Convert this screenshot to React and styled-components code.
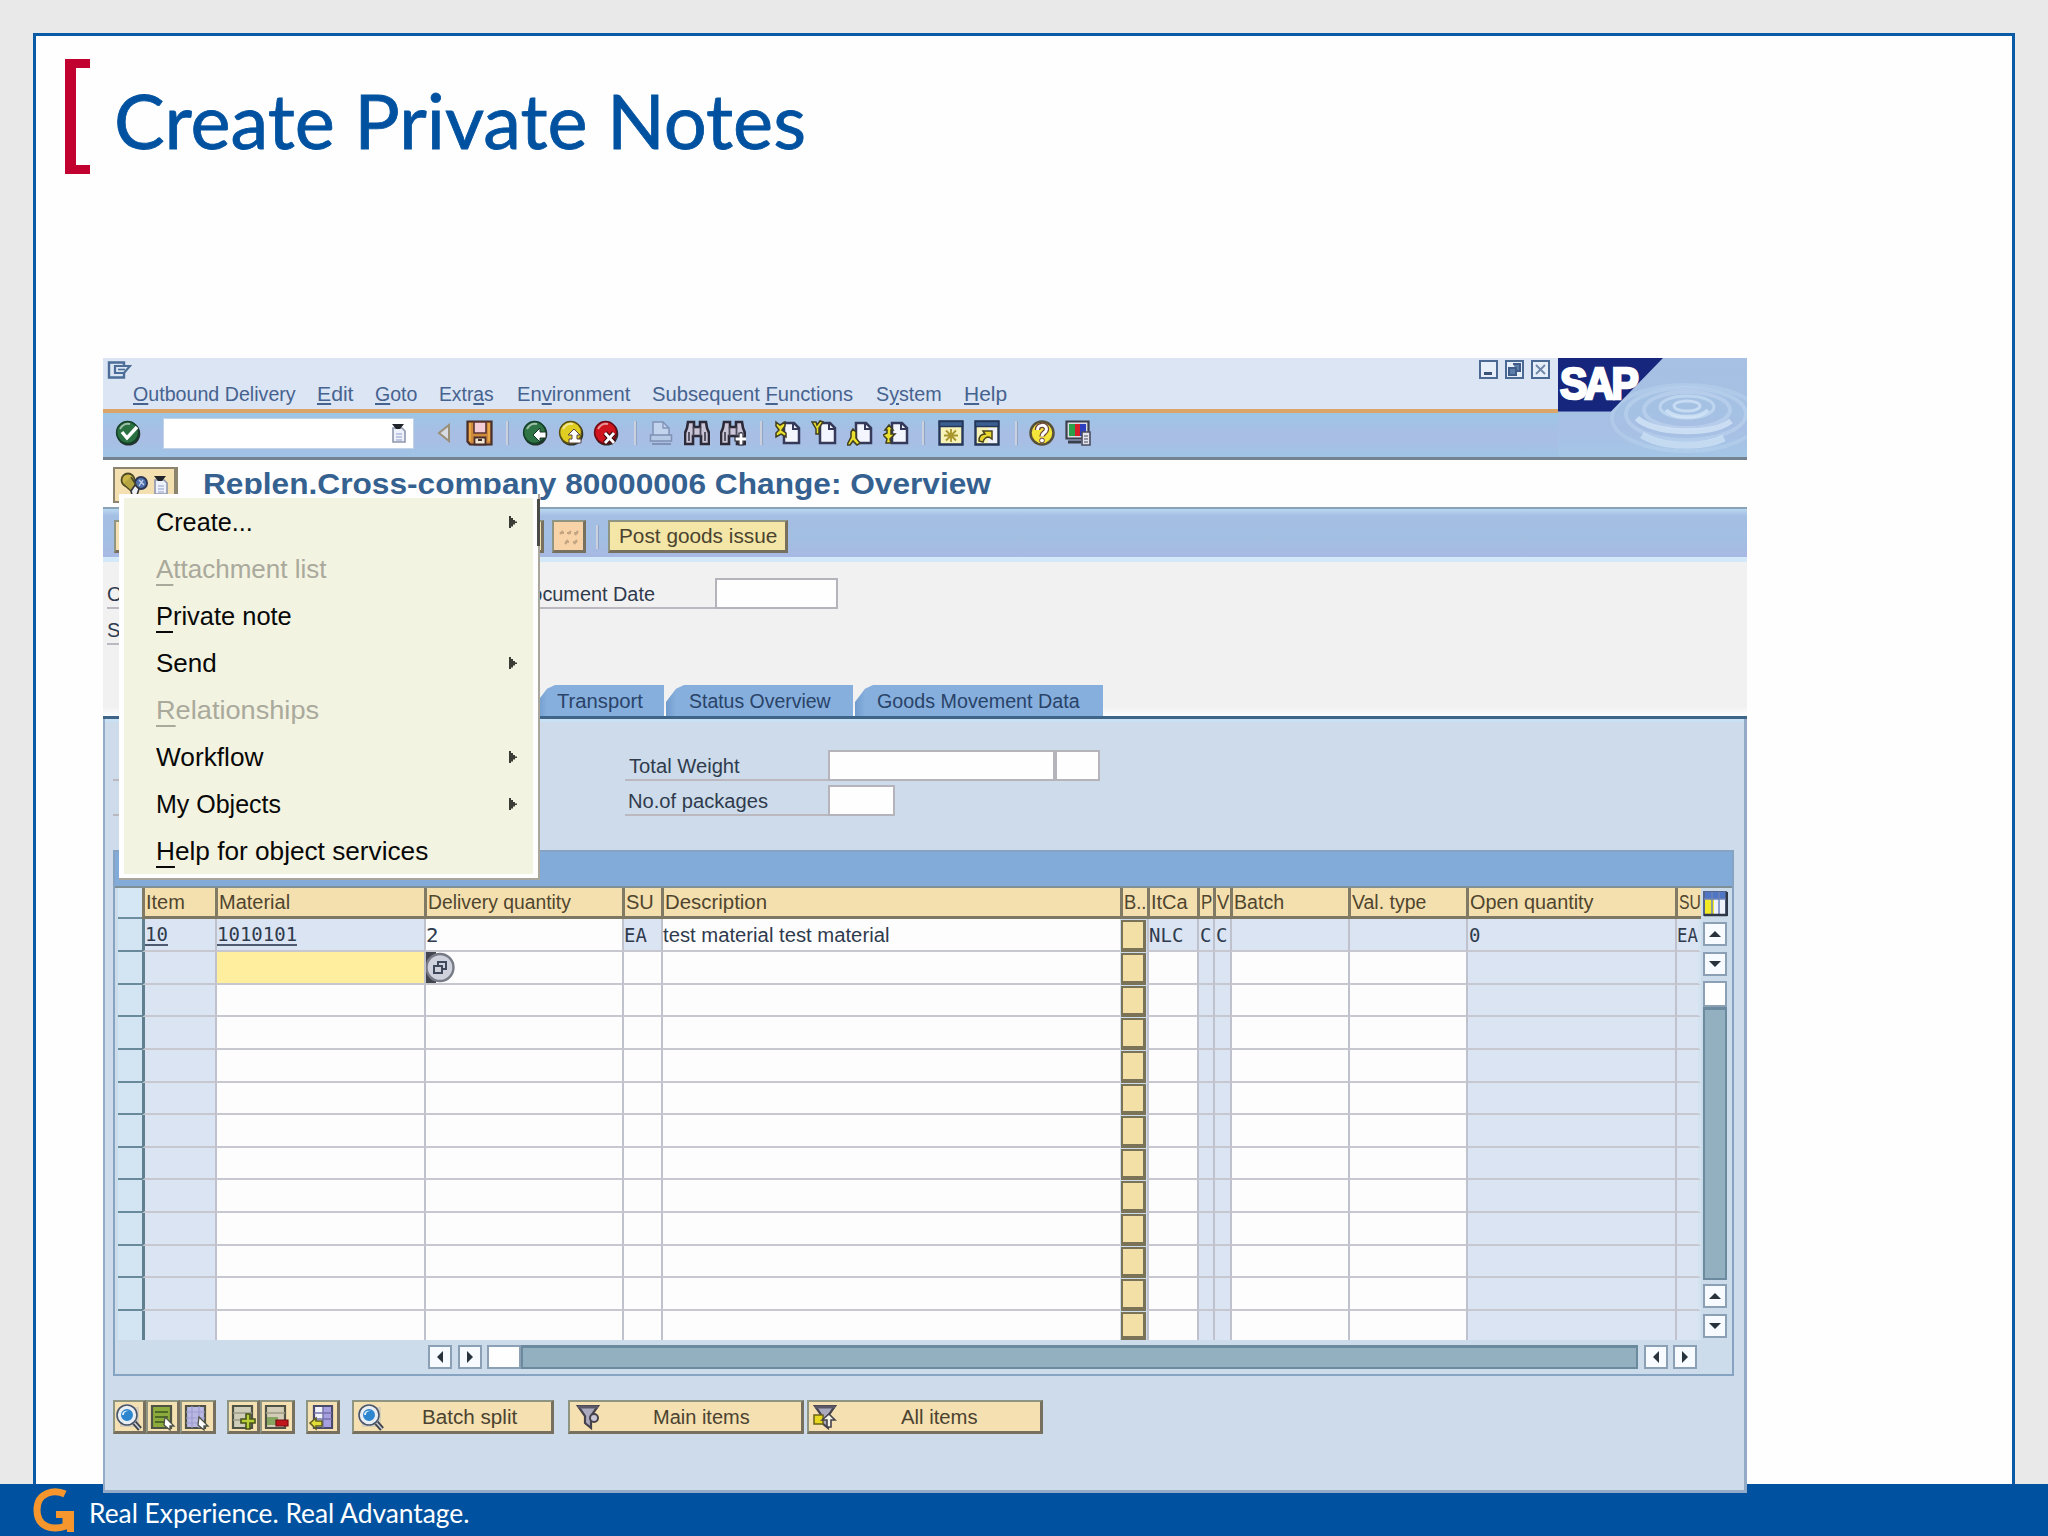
import React, { useLayoutEffect, useRef, useState } from "react";
import styled, { createGlobalStyle } from "styled-components";
/* Training slide with the SAP outbound delivery screen and its object services menu. */

const GlobalStyle = createGlobalStyle`
  * {
    box-sizing: border-box;
  }

  body {
    margin: 0;
    background: #e9e9e9;
    font-family: "Liberation Sans", Arial, sans-serif;
  }

  svg {
    display: block;
    flex: none;
  }
`;

/* ---------- text that is squeezed to a given width ---------- */

const FitBox = styled.span`
  display: inline-block;
  flex: none;
  width: ${({ $w }) => $w}px;
  margin-left: ${({ $ml }) => $ml || 0}px;
  white-space: nowrap;
  text-align: left;
`;

const FitInner = styled.span`
  display: inline-block;
  transform-origin: 0 50%;
`;

const Fit = ({ w, ml, children }) => {
  const ref = useRef(null);
  const [scale, setScale] = useState(1);

  useLayoutEffect(() => {
    setScale(w / ref.current.offsetWidth);
  }, [w]);

  return (
    <FitBox $w={w} $ml={ml}>
      <FitInner ref={ref} style={{ transform: `scaleX(${scale})` }}>
        {children}
      </FitInner>
    </FitBox>
  );
};

/* ---------- slide ---------- */

const Slide = styled.div`
  width: 2048px;
  height: 1536px;
  overflow: hidden;
  display: flex;
  flex-direction: column;
  background: #e9e9e9;
`;

const Frame = styled.main`
  height: 1451px;
  flex: none;
  margin: 33px 33px 0;
  border: 3px solid #0a5aa6;
  border-bottom: 0;
  background: #fefefe;
`;

const Heading = styled.header`
  display: flex;
  height: 322px;
  padding: 23px 0 0 29px;
`;

const Bracket = styled.div`
  width: 25px;
  height: 115px;
  border: solid #c10230;
  border-width: 9px 0 9px 11px;
`;

const Title = styled.h1`
  margin: 16px 0 0 24px;
  font: 400 75px/1.2 Lato, sans-serif;
  color: #0052a0;
  -webkit-text-stroke: 0.8px #0052a0;
`;

const Footer = styled.footer`
  flex: none;
  height: 52px;
  display: flex;
  align-items: center;
  padding-left: 33px;
  background: #0052a0;
  color: #fff;
  font: 400 26px/32px Lato, sans-serif;
`;

const Tagline = styled.div`
  padding: 5px 0 0 15px;
`;

/* ---------- window ---------- */

const Window = styled.section`
  position: relative;
  z-index: 1;
  width: 1644px;
  height: 1135px;
  margin-left: 67px;
  font-size: 20px;
  line-height: 24px;
  color: #2f3b4d;
`;

const Header = styled.div`
  display: grid;
  grid-template-columns: 1455px 189px;
  height: 102px;
  border-bottom: 3px solid #75828f;
`;

const MenuBar = styled.div`
  height: 51px;
  padding-left: 4px;
  background: #dbe5f3;
`;

const WindowControls = styled.div`
  display: flex;
  align-items: center;
  height: 21px;
  padding: 2px 8px 0 0;
  gap: 7px;

  svg:first-child {
    margin-right: auto;
  }
`;

const Menus = styled.nav`
  display: flex;
  align-items: center;
  height: 30px;
  padding-left: 26px;
  color: #46628f;

  u {
    text-underline-offset: 2px;
  }
`;

const Toolbar = styled.div`
  display: flex;
  align-items: center;
  height: 48px;
  padding: 0 0 4px 12px;
  border-top: 4px solid #dba468;
  background: linear-gradient(#9cc6e6, #a8bee4 45%, #a8bee4 65%, #9fc5e6);
`;

const Command = styled.div`
  display: flex;
  justify-content: flex-end;
  align-items: center;
  width: 251px;
  height: 31px;
  margin: 0 23px 0 22px;
  padding-right: 6px;
  border: 1px solid #c3d3ea;
  background: #fff;
`;

const Separator = styled.i`
  flex: none;
  width: 3px;
  height: 24px;
  margin: 0 ${({ $r }) => $r}px 0 ${({ $l }) => $l}px;
  background: #cbd0de;
  border-right: 1px solid #8fa3c4;
`;

const IconSlot = styled.span`
  flex: none;
  margin-left: ${({ $ml }) => $ml || 0}px;
`;

const TitleBar = styled.div`
  display: flex;
  align-items: center;
  height: 47px;
  padding-left: 10px;
  background: #fefefe;
  font-size: 30px;
  font-weight: 700;
  line-height: 36px;
  color: #356190;
`;

const ObjectServices = styled.div`
  display: flex;
  align-items: center;
  gap: 5px;
  width: 65px;
  height: 36px;
  margin: 3px 25px 0 0;
  padding-left: 5px;
  border: 2px solid #8d8470;
  border-right: 4px solid #8d8470;
  background: #f3dfb0;
`;

const AppToolbar = styled.div`
  display: flex;
  align-items: center;
  height: 55px;
  padding: 7px 0 0 11px;
  border-top: 2px solid #8aa2b5;
  border-bottom: 5px solid #d3e8f8;
  background: linear-gradient(#b9d8f1 0, #a5bee4 7px, #a2bfe2 60%, #a8b9e3);
`;

const TanButton = styled.button`
  display: flex;
  flex: none;
  align-items: center;
  justify-content: ${({ $center }) => ($center ? "center" : "flex-start")};
  width: ${({ $w }) => $w}px;
  height: ${({ $h }) => $h || 34}px;
  margin: 0 0 0 ${({ $ml }) => $ml || 0}px;
  padding: 0;
  border: solid;
  border-width: 2px 3px 3px 2px;
  border-color: #8e9583 #77705f #77705f #8e9583;
  background: ${({ $bg }) => $bg || "#f4e0b0"};
  font: inherit;
  color: #4b4330;
`;

const Form = styled.div`
  display: flex;
  flex-direction: column;
  height: 157px;
  padding-top: 16px;
  border-bottom: 3px solid #3e6588;
  background: linear-gradient(#f2f1f1 145px, #fafdff);
`;

const FieldRow = styled.div`
  display: flex;
  height: 31px;
  margin-bottom: ${({ $mb }) => $mb || 0}px;
`;

const FieldLabel = styled.label`
  display: flex;
  flex: none;
  align-items: center;
  width: ${({ $w }) => $w}px;
  margin-left: ${({ $ml }) => $ml || 0}px;
  padding-top: 2px;
  border-bottom: 2px solid #bbb9bf;
`;

const Input = styled.div`
  flex: none;
  width: ${({ $w }) => $w}px;
  margin-left: ${({ $ml }) => $ml || 0}px;
  border: 2px solid #b4b4ba;
  background: #fefefe;
`;

const Tabs = styled.div`
  display: flex;
  gap: 2px;
  height: 31px;
  margin-top: auto;
  padding-left: 434px;
`;

const Tab = styled.div`
  display: flex;
  align-items: center;
  width: ${({ $w }) => $w}px;
  padding-left: ${({ $pl }) => $pl}px;
  background: linear-gradient(90deg, #6f9bcc, #86afdd 10px);
  clip-path: polygon(0 100%, 0 55%, 10px 12%, 18px 0, 100% 0, 100% 100%);
  color: #2a4368;
`;

const Panel = styled.div`
  height: 774px;
  padding: 31px 0 0 8px;
  border: solid #93abc6;
  border-width: 0 3px 3px 2px;
  background: #cddbea;
  box-shadow: inset 0 3px #c8e1f5;
`;

/* ---------- item table ---------- */

const TableBox = styled.div`
  width: 1621px;
  height: 526px;
  margin-top: 34px;
  border: 2px solid #86a3c2;
  background: #cddcea;
`;

const TableTitle = styled.div`
  height: 36px;
  background: #82abda;
  border-bottom: 2px solid #7f8f96;
`;

const TableBody = styled.div`
  display: flex;
  gap: 2px;
  padding-left: 3px;
`;

const Grid = styled.div`
  width: 1583px;
`;

const Row = styled.div`
  display: grid;
  grid-template-columns: 24px 73px 209px 198px 39px 459px 27px 50px 16px 17px 118px 118px 209px 26px;
  height: ${({ $h }) => $h}px;
`;

const HeadCell = styled.div`
  display: flex;
  align-items: center;
  overflow: hidden;
  padding-left: 1px;
  border-left: 3px solid #817a64;
  border-bottom: 3px solid #7d7863;
  background: #f4e0ae;
  color: #4f452f;

  &:first-child {
    border-left: 0;
    border-bottom: 2px solid #6d8e9e;
    background: #d5e7f4;
  }
`;

const CELL_COLORS = {
  white: "#fefdfe",
  blue: "#dae4f3",
  focus: "#feee9e",
  select: "#d3e5f2",
};

const Cell = styled.div`
  display: flex;
  align-items: center;
  overflow: hidden;
  border-left: ${({ $kind }) => ($kind === "select" ? "0" : "2px solid #bfc1cc")};
  border-bottom: 2px solid ${({ $kind }) => ($kind === "select" ? "#688a9b" : "#c6c7cf")};
  background: ${({ $kind }) => CELL_COLORS[$kind]};
  font-family: ${({ $mono }) => ($mono ? '"DejaVu Sans Mono", monospace' : "inherit")};
  font-size: ${({ $mono }) => ($mono ? "19px" : "inherit")};

  &:first-child + & {
    border-left: 3px solid #61808f;
  }

  &:last-child {
    border-right: 3px solid #d3e3f0;
  }

  ${Row}:last-child > & {
    border-bottom: 0;
  }
`;

const Linked = styled.span`
  margin-top: 2px;
  border-bottom: 2px solid #4d5a70;
  line-height: 19px;
`;

const BatchButton = styled.div`
  margin: 1px 1px 0 1px;
  border: solid #7b7358;
  border-width: 2px 3px 4px 2px;
  background: #f2e0a6;
`;

const SideBar = styled.div`
  display: flex;
  flex-direction: column;
  align-items: flex-start;
  height: 452px;
`;

const BottomBar = styled.div`
  display: flex;
  height: 24px;
  margin-top: 5px;
  padding-left: 313px;
`;

const Arrow = styled.div`
  display: flex;
  flex: none;
  align-items: center;
  justify-content: center;
  width: 24px;
  height: 24px;
  margin: ${({ $m }) => $m || 0};
  border: 2px solid #8ba0b4;
  background: #f7faff;
`;

const Thumb = styled.div`
  flex: none;
  width: ${({ $w }) => $w}px;
  height: ${({ $h }) => $h}px;
  border: 2px solid #8ba0b4;
  background: #fefefe;
`;

const Track = styled.div`
  flex: none;
  width: ${({ $w }) => $w}px;
  height: ${({ $h }) => $h}px;
  border: 2px solid #6c8a9d;
  border-top-width: 3px;
  background: #93b0c0;
`;

const Actions = styled.div`
  display: flex;
  margin-top: 24px;
`;

/* ---------- popup menu ---------- */

const Popup = styled.div`
  position: absolute;
  left: 16px;
  top: 136px;
  width: 421px;
  height: 386px;
  padding: 4px 5px 5px;
  border: solid #a9a69b;
  border-width: 0 2px 2px 0;
  background: #fefefe;

  /* darker stretch of the right edge beside the first entry */
  &::after {
    content: "";
    position: absolute;
    right: -2px;
    top: 5px;
    width: 3px;
    height: 47px;
    background: #4a4a46;
  }
`;

const PopupList = styled.ul`
  margin: 0;
  padding: 0;
  list-style: none;
  background: #f3f3e1;
`;

const PopupItem = styled.li`
  display: flex;
  align-items: center;
  justify-content: space-between;
  height: 47px;
  padding: 0 16px 0 32px;
  font-size: 26px;
  line-height: 30px;
  color: ${({ $disabled }) => ($disabled ? "#a9a99c" : "#080808")};

  u {
    text-underline-offset: 6px;
    text-decoration-thickness: 2px;
  }
`;

/* ---------- icons ---------- */

const Svg = ({ w = 26, h = 26, box, children }) => (
  <svg width={w} height={h} viewBox={box || `0 0 ${w} ${h}`} fill="none">
    {children}
  </svg>
);

const Ball = ({ fill, dark, children }) => (
  <Svg>
    <circle cx="13.5" cy="13.8" r="11.8" fill="#26302c" />
    <circle cx="12.6" cy="12.6" r="11" fill={fill} stroke={dark} strokeWidth="1.5" />
    <path d="M5 9c2-4 6-6 10-5" stroke="#fff" strokeOpacity=".55" strokeWidth="2" />
    {children}
  </Svg>
);

const Enter = () => (
  <Ball fill="#2b7040" dark="#14402a">
    <path d="M7 12l5 6L22 7" stroke="#fff" strokeWidth="3.4" />
  </Ball>
);

const Back = () => (
  <Ball fill="#2f7445" dark="#14402a">
    <path d="M11 15l7-7v4h6v6h-6v4z" fill="#fff" stroke="#173423" />
  </Ball>
);

const Exit = () => (
  <Ball fill="#e0cd22" dark="#5b5012">
    <path d="M16 9l6 6h-3v4h4v4H11v-4h3v-4h-4z" fill="#fff" stroke="#5b4540" />
  </Ball>
);

const Cancel = () => (
  <Ball fill="#cf141d" dark="#6b0c16">
    <path d="M12 13l9 10M21 13l-9 10" stroke="#3a0a0e" strokeWidth="5" />
    <path d="M12 13l9 10M21 13l-9 10" stroke="#fff" strokeWidth="2.8" />
  </Ball>
);

const Help = () => (
  <Svg>
    <circle cx="13" cy="13" r="11.5" fill="#f4e53a" stroke="#56503a" strokeWidth="2.5" />
    <path d="M8.500 10c0-6 9-6 9-1 0 4-4.500 3.500-4.500 7.500" stroke="#6b4238" strokeWidth="5.500" />
    <circle cx="13" cy="20.500" r="2.400" fill="#fff" stroke="#6b4238" />
    <path d="M8.500 10c0-6 9-6 9-1 0 4-4.500 3.500-4.500 7.500" stroke="#fff" strokeWidth="3" />
  </Svg>
);

const ListDrop = () => (
  <Svg w={16} h={20}>
    <path d="M2 5h9l3 3v11H2z" fill="#eef1fa" stroke="#8e97ad" strokeWidth="1.600" />
    <path d="M5 11h6M5 14h6M5 17h6" stroke="#8f9fc9" strokeWidth="1.200" />
    <path d="M1 1h12L9 6H5z" fill="#22242b" />
  </Svg>
);

const Collapse = () => (
  <Svg w={14} h={20}>
    <path d="M12 2v16L2 10z" fill="#d9dbe2" stroke="#9a9077" strokeWidth="2" />
  </Svg>
);

const Save = () => (
  <Svg w={27}>
    <path d="M1.500 1.500h24v23H4l-2.500-3z" fill="#d08a3c" stroke="#4a2e2a" strokeWidth="2.200" />
    <path d="M8 2h12v11H8z" fill="#f5cdd6" stroke="#5b3430" strokeWidth="1.600" />
    <path d="M8.500 17.500h11v7h-11z" fill="#f1e6d2" stroke="#4a2e2a" strokeWidth="1.800" />
    <path d="M12 20h4" stroke="#4a2e2a" strokeWidth="2" />
    <path d="M4 3v18M23 3v18" stroke="#efb04b" strokeWidth="1.600" />
  </Svg>
);

const Print = () => (
  <Svg w={24}>
    <path d="M4 15V2h10l6 6v7" fill="#c3d4ee" stroke="#8193b6" strokeWidth="1.500" />
    <path d="M14 2v6h6" stroke="#8193b6" strokeWidth="1.300" />
    <path d="M1.500 15h21v6h-21z" fill="#b6cae6" stroke="#7f90b3" strokeWidth="1.500" />
    <path d="M3 24h19" stroke="#8193b6" strokeWidth="2" />
  </Svg>
);

const Find = ({ next }) => (
  <Svg>
    <path
      d="M4 2h6v5h6V2h6l1 6 2 5v11h-8v-8H9v8H1V13l2-5z"
      fill="#c9c4d6"
      stroke="#2c2a38"
      strokeWidth="2.600"
    />
    <path d="M9.500 7v9M16.500 7v9M5 12v9M21 12v9" stroke="#4b4859" strokeWidth="1.800" />
    {next && <path d="M15 17h4v-4h4v4h4v4h-4v4h-4v-4h-4z" fill="#fff" stroke="#2c2a38" strokeWidth="1.200" />}
  </Svg>
);

const PAGE_ARROWS = {
  first: "M1 2l4 3 5-3v4l-3 4 4 3v4l-5-3-5 3v-4l3-3-3-4z",
  prev: "M1 2h4l1 3 3-4 3 1-4 6v6H5V9z",
  next: "M6 9l3 3v6l4 5-3 2-4-4-3 4H0l4-8v-5z",
  last: "M6 5l4 5H8v4h4l-5 5 1 4H3l1-4-4-4 4-2v-3H2z",
};

const Page = ({ kind }) => (
  <Svg>
    <path d="M9 3h10l5 5v15H9z" fill="#f4f6ff" stroke="#35395a" strokeWidth="2.500" />
    <path d="M18 3v6h6" stroke="#35395a" strokeWidth="2" />
    <path d={PAGE_ARROWS[kind]} fill="#eadf2c" stroke="#3f3d22" strokeWidth="1.500" />
  </Svg>
);

const Session = ({ shortcut }) => (
  <Svg>
    <path d="M1.500 1.500h23v23h-23z" fill="#f7f3b8" stroke="#24365a" strokeWidth="2.400" />
    <path d="M1.500 1.500h23v5h-23z" fill="#3c5f92" stroke="#24365a" strokeWidth="1.400" />
    {shortcut ? (
      <g>
        <path d="M14 8h9v15h-9z" fill="#eef1fb" />
        <path d="M5 21c0-5 2-7 6-7l-2-3h9v8l-3-2c-3 0-5 1-6 5z" fill="#e9d62e" stroke="#4b451e" strokeWidth="1.500" />
      </g>
    ) : (
      <path d="M13 9v13M6 15.500h14M8 10.500l10 10M18 10.500l-10 10" stroke="#a8952b" strokeWidth="1.800" />
    )}
  </Svg>
);

const LayoutMenu = () => (
  <Svg w={27}>
    <path d="M1.500 1.500h22v17h-22z" fill="#dcdce4" stroke="#3b3f4c" strokeWidth="2.200" />
    <path d="M4 4h6v12H4z" fill="#2ba04a" />
    <path d="M10 4h5v12h-5z" fill="#d51e2a" />
    <path d="M15 4h6v12h-6z" fill="#2c3fc0" />
    <path d="M3 22h13" stroke="#3b3f4c" strokeWidth="3" />
    <path d="M17 12h8v13h-8z" fill="#e4e4ee" stroke="#4a4d5e" strokeWidth="1.600" />
    <path d="M19 16h4M19 19h4M19 22h4" stroke="#4a4d5e" strokeWidth="1.200" />
  </Svg>
);

const WindowMenu = () => (
  <Svg w={25} h={18}>
    <path d="M17 12v4.500H2v-15h15v3" stroke="#4b6d98" strokeWidth="2.400" />
    <path d="M8 5h15l-6 7H8z" fill="#dbe5f3" stroke="#4b6d98" strokeWidth="2.200" />
    <path d="M11 8.500h7" stroke="#4b6d98" strokeWidth="1.600" />
  </Svg>
);

const Control = ({ children }) => (
  <Svg w={19} h={19}>
    <path d="M1 1h17v17H1z" fill="#e6eefa" stroke="#4b6a93" strokeWidth="2" />
    {children}
  </Svg>
);

const Brand = () => (
  <svg width="189" height="99" viewBox="0 0 189 99">
    <defs>
      <linearGradient id="water" x1="0" y1="0" x2="0" y2="1">
        <stop offset="0" stopColor="#a7c0e3" />
        <stop offset=".55" stopColor="#a4c1e4" />
        <stop offset=".7" stopColor="#a8bfe4" />
        <stop offset="1" stopColor="#a4c6e7" />
      </linearGradient>
    </defs>
    <rect width="189" height="99" fill="url(#water)" />
    <g fill="none" stroke="#cfe2f6">
      <ellipse cx="128" cy="60" rx="74" ry="33" strokeWidth="4" strokeOpacity=".25" />
      <ellipse cx="128" cy="56" rx="60" ry="26" strokeWidth="4" strokeOpacity=".35" />
      <ellipse cx="129" cy="52" rx="43" ry="18" strokeWidth="4" strokeOpacity=".4" />
      <ellipse cx="129" cy="49" rx="27" ry="11" strokeWidth="3" strokeOpacity=".6" />
      <ellipse cx="129" cy="48" rx="13" ry="5" strokeWidth="3" strokeOpacity=".8" />
      <path d="M79 60c12 14 72 20 94 3" strokeWidth="6" stroke="#d8e9fa" strokeOpacity=".7" />
      <path d="M84 77c20 13 62 13 82 3" strokeWidth="7" stroke="#d3e6f8" strokeOpacity=".65" />
      <path d="M108 52c8 9 34 9 42 0" strokeWidth="4" stroke="#d8e9fa" strokeOpacity=".7" />
    </g>
    <path d="M0 0h105L53 53.500H0z" fill="#16267c" />
    <text
      x="2"
      y="41"
      fill="#fff"
      stroke="#fff"
      strokeWidth="2.600"
      fontFamily="Liberation Sans, Arial, sans-serif"
      fontWeight="700"
      fontSize="44"
      textLength="76"
      lengthAdjust="spacingAndGlyphs"
      letterSpacing="-3"
    >
      SAP
    </text>
  </svg>
);

const Services = () => (
  <Svg w={28} h={26}>
    <circle cx="8" cy="8" r="6.500" fill="#c9b548" stroke="#4c4a26" strokeWidth="1.800" />
    <circle cx="21" cy="11" r="6" fill="#5173ad" stroke="#2c3654" strokeWidth="2" />
    <path d="M3 12l8 7 5-6-5-8" fill="#b5a542" stroke="#4c4a26" strokeWidth="1.500" />
    <path d="M11 19l4-6 4 4-2 6h-5z" fill="#eef0f4" stroke="#33363e" strokeWidth="1.600" />
    <path d="M19 8l5 5M23 8l-4 6" stroke="#c9d6ee" strokeWidth="1.300" />
  </Svg>
);

const Dots = () => (
  <Svg w={26} h={24}>
    <path
      d="M4 9h4M11 9h4M18 9h4M9 18h4M17 18h4M4 10l3-3M12 10l3-3M19 11l3-4M9 20l3-4M18 20l3-4"
      stroke="#c3a584"
      strokeWidth="2.200"
    />
  </Svg>
);

const ColumnsIcon = () => (
  <Svg w={25} h={29}>
    <path d="M1 4h22v23H1z" fill="#eef2fb" stroke="#55658a" strokeWidth="2" />
    <path d="M2 4h20v7H2z" fill="#4f76c4" />
    <path d="M2 11h9v15H2z" fill="#f3ea27" />
    <path d="M9 4v23M16 4v23M1 11h22" stroke="#6d83b8" strokeWidth="1.500" />
    <path d="M1 27h23M24 4v24" stroke="#2e3748" strokeWidth="2.400" />
  </Svg>
);

const ValueHelp = () => (
  <Svg w={29} h={31}>
    <path d="M0 0h10v31H0z" fill="#42454d" />
    <circle cx="14" cy="15.500" r="13.500" fill="#cfd1dc" stroke="#777b86" strokeWidth="2.400" />
    <path d="M8 14h8v7H8zM12 14v-4h8v7h-4" stroke="#40495c" strokeWidth="2" />
  </Svg>
);

const Triangle = ({ dir }) => {
  const turn = { up: 0, right: 90, down: 180, left: 270 }[dir];
  return (
    <Svg w={12} h={12}>
      <path d="M0 9h12L6 3z" fill="#28323c" transform={`rotate(${turn} 6 6)`} />
    </Svg>
  );
};

const Submenu = () => (
  <Svg w={8} h={12}>
    <path d="M0 0h2v2h2v2h2v1.500h2V7H6v1.500H4v2H2V12H0z" fill="#3c3c36" />
  </Svg>
);

const Magnifier = () => (
  <Svg w={28} h={28}>
    <path d="M5 4h19v20H5z" fill="#d8cfb8" />
    <path d="M17 17l8 9" stroke="#3d4048" strokeWidth="5" />
    <path d="M17 17l8 9" stroke="#c6cad4" strokeWidth="1.600" />
    <circle cx="12" cy="12" r="8.500" fill="#2e86cf" stroke="#e9eef4" strokeWidth="5" />
    <circle cx="12" cy="12" r="10" stroke="#4a5464" strokeWidth="1.600" />
    <path d="M7 12c0-4 4-5 7-4-3 0-5 1-5 4z" fill="#d9eefc" />
  </Svg>
);

const Sheet = ({ fill, children }) => (
  <Svg w={28} h={28}>
    <path d="M4 3h19v22H4z" fill={fill} stroke="#4f5346" strokeWidth="2.200" />
    {children}
  </Svg>
);

const Pointer = () => <path d="M17 14l9 9h-4v4l-6-5z" fill="#fff" stroke="#4f5346" strokeWidth="1.300" />;

const SelectAll = () => (
  <Sheet fill="#8cab3c">
    <path d="M7 9h13M7 14h13M7 19h9" stroke="#4d6b24" strokeWidth="2.200" />
    <Pointer />
  </Sheet>
);

const DeselectAll = () => (
  <Sheet fill="#b9b8e2">
    <path d="M4 9h19M4 15h19M4 20h19M10 3v22M17 3v22" stroke="#9d9bce" strokeWidth="1.200" />
    <Pointer />
  </Sheet>
);

const InsertRow = () => (
  <Sheet fill="#cfcdb8">
    <path d="M4 10h19M4 17h19" stroke="#9c9b85" strokeWidth="1.500" />
    <path d="M12 16h5v-5h4v5h5v4h-5v6h-4v-6h-5z" fill="#b9cf35" stroke="#45521a" strokeWidth="1.600" />
  </Sheet>
);

const DeleteRow = () => (
  <Sheet fill="#d3cdb8">
    <path d="M5 14h11v8H5z" fill="#86a561" />
    <path d="M4 10h19" stroke="#9c9b85" strokeWidth="1.500" />
    <path d="M14 17h12v6H14z" fill="#c2141b" stroke="#6e1013" strokeWidth="1.200" />
  </Sheet>
);

const Configure = () => (
  <Svg w={28} h={28}>
    <path d="M6 3h18v22H6z" fill="#f2f2fb" stroke="#4a4a6a" strokeWidth="2.200" />
    <path d="M15 4h8v20h-8z" fill="#a69fe0" />
    <path d="M6 10h18M6 16h18M15 4v21" stroke="#7572a8" strokeWidth="1.400" />
    <path d="M2 20l6-5v3h6v5H8v3z" fill="#e2dc38" stroke="#5c5a1e" strokeWidth="1.500" />
  </Svg>
);

const Filter = ({ reset }) => (
  <Svg w={28} h={28}>
    <path d="M3 3h20l-7 10v12l-6-5v-7z" fill="#aaa9bd" stroke="#45424c" strokeWidth="2.200" />
    <path d="M3 4h20" stroke="#5b5868" strokeWidth="3" />
    {reset ? (
      <g>
        <path d="M2 12h9v9H2z" fill="#e8d81f" stroke="#6b611b" strokeWidth="1.500" />
        <path d="M10 17l7-6 6 6h-4v7h-4v-7z" fill="#f4f2e4" stroke="#45424c" strokeWidth="1.600" />
      </g>
    ) : (
      <circle cx="19" cy="15" r="4" fill="#c9c7d8" stroke="#45424c" strokeWidth="2" />
    )}
  </Svg>
);

const Logo = () => (
  <svg width="41" height="44" viewBox="0 0 41 44">
    <path
      d="M32 6C22 1 4 4 4 22c0 17 15 21 29 16V26.500H23"
      fill="none"
      stroke="#f7962c"
      strokeWidth="7"
    />
    <path d="M34 23h7v21h-7z" fill="#f7962c" />
  </svg>
);

/* ---------- data ---------- */

const MENUS = [
  { key: "Outbound", label: <><u>O</u>utbound Delivery</>, w: 163, ml: 0 },
  { key: "Edit", label: <><u>E</u>dit</>, w: 36, ml: 21 },
  { key: "Goto", label: <><u>G</u>oto</>, w: 42, ml: 22 },
  { key: "Extras", label: <>Extr<u>a</u>s</>, w: 55, ml: 22 },
  { key: "Environment", label: <>En<u>v</u>ironment</>, w: 113, ml: 23 },
  { key: "Subsequent", label: <>Subsequent <u>F</u>unctions</>, w: 201, ml: 22 },
  { key: "System", label: <>S<u>y</u>stem</>, w: 66, ml: 23 },
  { key: "Help", label: <><u>H</u>elp</>, w: 43, ml: 22 },
];

const POPUP = [
  { key: "create", label: "Create...", w: 97, sub: true },
  { key: "list", label: <><u>A</u>ttachment list</>, w: 171, disabled: true },
  { key: "note", label: <><u>P</u>rivate note</>, w: 136 },
  { key: "send", label: "Send", w: 61, sub: true },
  { key: "rel", label: <><u>R</u>elationships</>, w: 163, disabled: true },
  { key: "workflow", label: "Workflow", w: 107, sub: true },
  { key: "objects", label: "My Objects", w: 125, sub: true },
  { key: "help", label: <><u>H</u>elp for object services</>, w: 272 },
];

const COLUMNS = [
  { kind: "select" },
  { title: "Item", w: 39, kind: "blue" },
  { title: "Material", w: 71, kind: "white", first: "blue" },
  { title: "Delivery quantity", w: 143, kind: "white" },
  { title: "SU", w: 28, kind: "white", first: "blue" },
  { title: "Description", w: 102, kind: "white" },
  { title: "B..", w: 22, kind: "button" },
  { title: "ItCa", w: 37, kind: "white", first: "blue" },
  { title: "P", w: 11, kind: "blue" },
  { title: "V", w: 12, kind: "blue" },
  { title: "Batch", w: 50, kind: "white", first: "blue" },
  { title: "Val. type", w: 74, kind: "white", first: "blue" },
  { title: "Open quantity", w: 124, kind: "blue" },
  { title: "SU", w: 22, kind: "blue" },
];

const VALUES = {
  1: <Linked><Fit w={23}>10</Fit></Linked>,
  2: <Linked><Fit w={80}>1010101</Fit></Linked>,
  3: <Fit w={12}>2</Fit>,
  4: <Fit w={23}>EA</Fit>,
  5: <Fit w={226}>test material test material</Fit>,
  7: <Fit w={34}>NLC</Fit>,
  8: <Fit w={11} ml={1}>C</Fit>,
  9: <Fit w={11} ml={1}>C</Fit>,
  12: <Fit w={11} ml={1}>0</Fit>,
  13: <Fit w={21}>EA</Fit>,
};

const ROW_COUNT = 13;

const rowHeight = (r) => {
  if (r === 0) return 33;
  return r === ROW_COUNT - 1 ? 29.3 : 32.64;
};

const cellKind = (col, r, c) => {
  if (r === 0 && col.first) return col.first;
  if (r === 1 && c === 2) return "focus";
  return col.kind;
};

/* ---------- parts ---------- */

const WindowHeader = () => (
  <Header>
    <div>
      <MenuBar>
        <WindowControls>
          <WindowMenu />
          <Control>
            <path d="M5 13.500h8" stroke="#3a5379" strokeWidth="3" />
          </Control>
          <Control>
            <path d="M8 4h7v7h-3M4 8h7v7H4z" fill="#5b7dab" stroke="#3f5c88" strokeWidth="2" />
          </Control>
          <Control>
            <path d="M5 5l9 9M14 5l-9 9" stroke="#6f87a8" strokeWidth="1.800" />
          </Control>
        </WindowControls>
        <Menus>
          {MENUS.map(({ key, label, w, ml }) => (
            <Fit key={key} w={w} ml={ml}>
              {label}
            </Fit>
          ))}
        </Menus>
      </MenuBar>
      <Toolbar>
        <Enter />
        <Command>
          <ListDrop />
        </Command>
        <Collapse />
        <IconSlot $ml={15}><Save /></IconSlot>
        <Separator $l={13} $r={13} />
        <Back />
        <IconSlot $ml={10}><Exit /></IconSlot>
        <IconSlot $ml={9}><Cancel /></IconSlot>
        <Separator $l={15} $r={12} />
        <Print />
        <IconSlot $ml={11}><Find /></IconSlot>
        <IconSlot $ml={10}><Find next /></IconSlot>
        <Separator $l={14} $r={12} />
        <Page kind="first" />
        <IconSlot $ml={10}><Page kind="prev" /></IconSlot>
        <IconSlot $ml={10}><Page kind="next" /></IconSlot>
        <IconSlot $ml={10}><Page kind="last" /></IconSlot>
        <Separator $l={13} $r={13} />
        <Session />
        <IconSlot $ml={10}><Session shortcut /></IconSlot>
        <Separator $l={15} $r={11} />
        <Help />
        <IconSlot $ml={10}><LayoutMenu /></IconSlot>
      </Toolbar>
    </div>
    <Brand />
  </Header>
);

const ItemTable = () => (
  <TableBox>
    <TableTitle />
    <TableBody>
      <Grid>
        <Row $h={31}>
          {COLUMNS.map(({ title, w }, c) => (
            <HeadCell key={c}>{title && <Fit w={w}>{title}</Fit>}</HeadCell>
          ))}
        </Row>
        {Array.from({ length: ROW_COUNT }, (_, r) => (
          <Row key={r} $h={rowHeight(r)}>
            {COLUMNS.map((col, c) =>
              col.kind === "button" ? (
                <BatchButton key={c} />
              ) : (
                <Cell key={c} $kind={cellKind(col, r, c)} $mono={c !== 5}>
                  {r === 0 && VALUES[c]}
                  {r === 1 && c === 3 && <ValueHelp />}
                </Cell>
              )
            )}
          </Row>
        ))}
      </Grid>
      <SideBar>
        <ColumnsIcon />
        <Arrow $m="5px 0 6px"><Triangle dir="up" /></Arrow>
        <Arrow $m="0 0 5px"><Triangle dir="down" /></Arrow>
        <Thumb $w={24} $h={26} />
        <Track $w={24} $h={273} />
        <Arrow $m="4px 0 6px"><Triangle dir="up" /></Arrow>
        <Arrow><Triangle dir="down" /></Arrow>
      </SideBar>
    </TableBody>
    <BottomBar>
      <Arrow $m="0 6px 0 0"><Triangle dir="left" /></Arrow>
      <Arrow $m="0 5px 0 0"><Triangle dir="right" /></Arrow>
      <Thumb $w={34} $h={24} />
      <Track $w={1117} $h={24} />
      <Arrow $m="0 5px 0 6px"><Triangle dir="left" /></Arrow>
      <Arrow><Triangle dir="right" /></Arrow>
    </BottomBar>
  </TableBox>
);

const ObjectMenu = () => (
  <Popup>
    <PopupList>
      {POPUP.map(({ key, label, w, sub, disabled }) => (
        <PopupItem key={key} $disabled={disabled}>
          <Fit w={w}>{label}</Fit>
          {sub && <Submenu />}
        </PopupItem>
      ))}
    </PopupList>
  </Popup>
);

const App = () => (
  <Slide>
    <GlobalStyle />
    <Frame>
      <Heading>
        <Bracket />
        <Title>
          <Fit w={692}>Create Private Notes</Fit>
        </Title>
      </Heading>
      <Window>
        <WindowHeader />
        <TitleBar>
          <ObjectServices>
            <Services />
            <ListDrop />
          </ObjectServices>
          <Fit w={788}>Replen.Cross-company 80000006 Change: Overview</Fit>
        </TitleBar>
        <AppToolbar>
          <TanButton $w={430} $h={33} />
          <TanButton $w={34} $h={33} $ml={8} $center $bg="#f8d3a8">
            <Dots />
          </TanButton>
          <Separator $l={10} $r={9} />
          <TanButton $w={180} $h={33} $center $bg="#f3e6a6">
            <Fit w={158}>Post goods issue</Fit>
          </TanButton>
        </AppToolbar>
        <Form>
          <FieldRow $mb={5}>
            <FieldLabel $ml={4} $w={300}>O</FieldLabel>
            <FieldLabel $ml={107} $w={201}>
              <Fit w={138} ml={3}>Document Date</Fit>
            </FieldLabel>
            <Input $w={123} />
          </FieldRow>
          <FieldRow>
            <FieldLabel $ml={4} $w={300}>S</FieldLabel>
          </FieldRow>
          <Tabs>
            <Tab $w={127} $pl={20}><Fit w={86}>Transport</Fit></Tab>
            <Tab $w={187} $pl={23}><Fit w={142}>Status Overview</Fit></Tab>
            <Tab $w={248} $pl={22}><Fit w={203}>Goods Movement Data</Fit></Tab>
          </Tabs>
        </Form>
        <Panel>
          <FieldRow $mb={4}>
            <FieldLabel $w={300} />
            <FieldLabel $ml={212} $w={203}>
              <Fit w={111} ml={4}>Total Weight</Fit>
            </FieldLabel>
            <Input $w={227} />
            <Input $w={45} />
          </FieldRow>
          <FieldRow>
            <FieldLabel $w={300} />
            <FieldLabel $ml={212} $w={203}>
              <Fit w={140} ml={3}>No.of packages</Fit>
            </FieldLabel>
            <Input $w={67} />
          </FieldRow>
          <ItemTable />
          <Actions>
            <TanButton $w={33}><Magnifier /></TanButton>
            <TanButton $w={34}><SelectAll /></TanButton>
            <TanButton $w={36}><DeselectAll /></TanButton>
            <TanButton $w={33} $ml={11}><InsertRow /></TanButton>
            <TanButton $w={35}><DeleteRow /></TanButton>
            <TanButton $w={34} $ml={11}><Configure /></TanButton>
            <TanButton $w={202} $ml={12}>
              <IconSlot $ml={3}><Magnifier /></IconSlot>
              <Fit w={95} ml={37}>Batch split</Fit>
            </TanButton>
            <TanButton $w={236} $ml={14}>
              <IconSlot $ml={5}><Filter /></IconSlot>
              <Fit w={97} ml={50}>Main items</Fit>
            </TanButton>
            <TanButton $w={236} $ml={3}>
              <IconSlot $ml={3}><Filter reset /></IconSlot>
              <Fit w={77} ml={61}>All items</Fit>
            </TanButton>
          </Actions>
        </Panel>
        <ObjectMenu />
      </Window>
    </Frame>
    <Footer>
      <Logo />
      <Tagline>
        <Fit w={380}>Real Experience. Real Advantage.</Fit>
      </Tagline>
    </Footer>
  </Slide>
);

export default App;
